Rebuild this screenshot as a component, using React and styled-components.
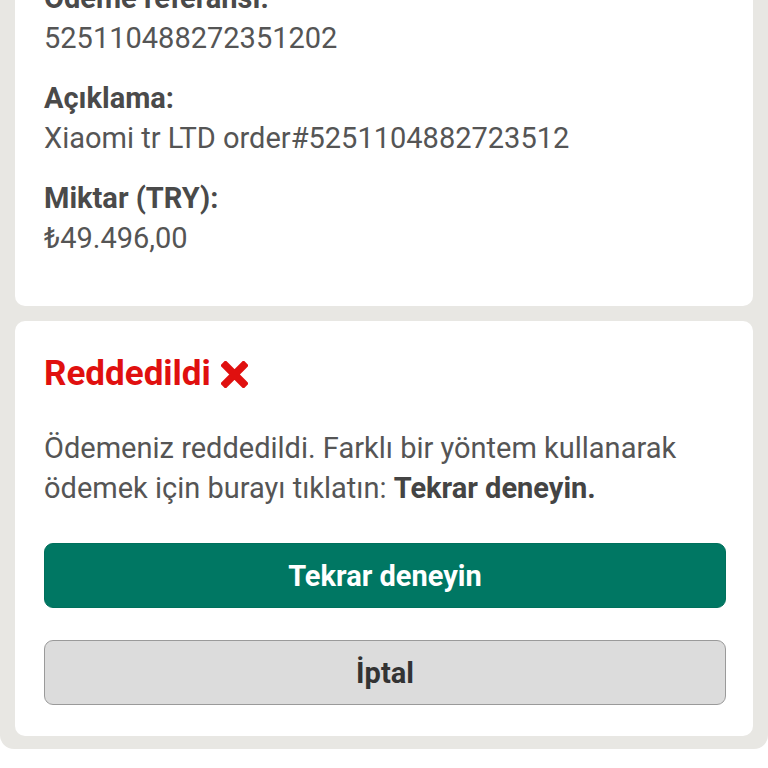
import React from "react";
import styled, { createGlobalStyle } from "styled-components";

const GlobalStyle = createGlobalStyle`
  * { box-sizing: border-box; }
  body {
    margin: 0;
    background: #ffffff;
    font-family: Roboto, "Liberation Sans", sans-serif;
  }
`;

const Page = styled.main`
  background: #e8e7e3;
  padding: 0 15px 13px;
  border-radius: 0 0 14px 14px;
  margin-top: -22px;
  display: flex;
  flex-direction: column;
  gap: 15px;
  overflow: hidden;
`;

const Card = styled.section`
  background: #ffffff;
  border-radius: ${(p) => (p.$top ? "0 0 10px 10px" : "10px")};
  padding: ${(p) => p.$pad};
  display: flex;
  flex-direction: column;
`;

const Field = styled.div`
  display: flex;
  flex-direction: column;
  & + & {
    margin-top: 20px;
  }
`;

const Label = styled.div`
  font-size: 29px;
  line-height: 40px;
  font-weight: 700;
  color: #4a4a4a;
`;

const Value = styled.div`
  font-size: 29px;
  line-height: 40px;
  color: #555555;
`;

const Status = styled.h2`
  margin: 0;
  font-size: 35px;
  line-height: 40px;
  font-weight: 700;
  color: #e0100f;
  display: flex;
  align-items: center;
  gap: 10px;
`;

const Message = styled.p`
  margin: 34px 0 0;
  font-size: 29px;
  line-height: 40px;
  color: #555555;

  strong {
    color: #444444;
    font-weight: 700;
  }
`;

const Button = styled.button`
  height: 65px;
  width: 100%;
  border-radius: 9px;
  font-family: Roboto, "Liberation Sans", sans-serif;
  font-size: 29px;
  font-weight: 700;
  cursor: pointer;
  margin-top: ${(p) => p.$mt};
  background: ${(p) => (p.$primary ? "#007763" : "#dcdcdc")};
  color: ${(p) => (p.$primary ? "#ffffff" : "#333333")};
  border: 1px solid ${(p) => (p.$primary ? "#00705c" : "#9a9a9a")};
`;

function CrossIcon() {
  return (
    <svg width="27" height="27" viewBox="0 0 27 27">
      <path
        d="M4.5 4.5 L22.5 22.5 M22.5 4.5 L4.5 22.5"
        stroke="#e0100f"
        strokeWidth="7.5"
        strokeLinecap="square"
      />
    </svg>
  );
}

const fields = [
  { label: "Ödeme referansı:", value: "525110488272351202" },
  { label: "Açıklama:", value: "Xiaomi tr LTD order#5251104882723512" },
  { label: "Miktar (TRY):", value: "₺49.496,00" },
];

export default function App() {
  return (
    <>
      <GlobalStyle />
      <Page>
        <Card $top $pad="0 27px 48px 29px">
          {fields.map((f) => (
            <Field key={f.label}>
              <Label>{f.label}</Label>
              <Value>{f.value}</Value>
            </Field>
          ))}
        </Card>
        <Card $pad="33px 27px 31px 29px">
          <Status>
            Reddedildi <CrossIcon />
          </Status>
          <Message>
            Ödemeniz reddedildi. Farklı bir yöntem kullanarak ödemek için
            burayı tıklatın: <strong>Tekrar deneyin.</strong>
          </Message>
          <Button $primary $mt="35px">Tekrar deneyin</Button>
          <Button $mt="32px">İptal</Button>
        </Card>
      </Page>
    </>
  );
}
